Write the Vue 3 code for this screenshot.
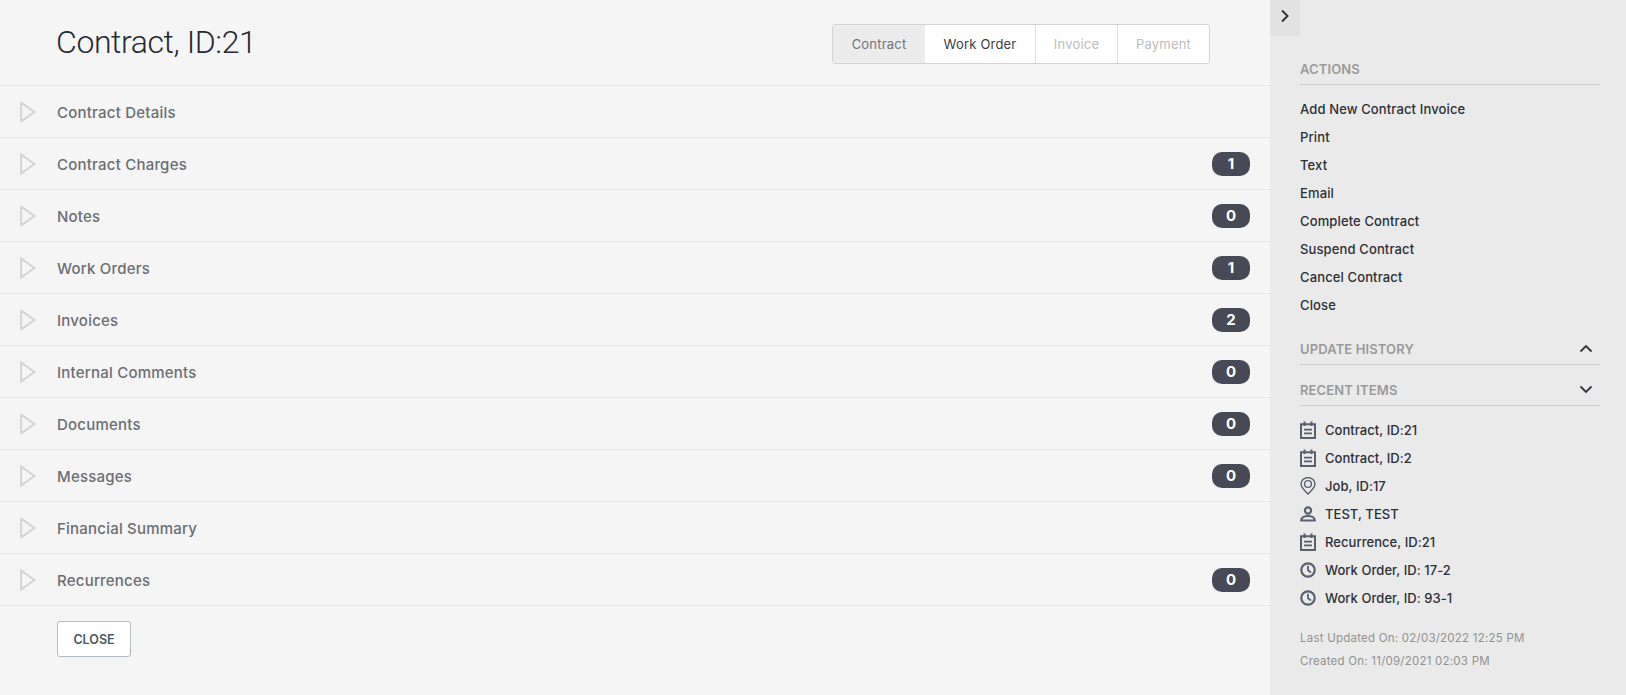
<script setup>
const rows = [
  { name: 'Contract Details' },
  { name: 'Contract Charges', count: 1 },
  { name: 'Notes', count: 0 },
  { name: 'Work Orders', count: 1 },
  { name: 'Invoices', count: 2 },
  { name: 'Internal Comments', count: 0 },
  { name: 'Documents', count: 0 },
  { name: 'Messages', count: 0 },
  { name: 'Financial Summary' },
  { name: 'Recurrences', count: 0 },
]
const tabs = [
  { label: 'Contract', cls: 'active' },
  { label: 'Work Order', cls: 'enabled' },
  { label: 'Invoice', cls: 'disabled' },
  { label: 'Payment', cls: 'disabled' },
]
const actions = ['Add New Contract Invoice', 'Print', 'Text', 'Email', 'Complete Contract', 'Suspend Contract', 'Cancel Contract', 'Close']
const recent = [
  { icon: 'cal', label: 'Contract, ID:21' },
  { icon: 'cal', label: 'Contract, ID:2' },
  { icon: 'pin', label: 'Job, ID:17' },
  { icon: 'user', label: 'TEST, TEST' },
  { icon: 'cal', label: 'Recurrence, ID:21' },
  { icon: 'clock', label: 'Work Order, ID: 17-2' },
  { icon: 'clock', label: 'Work Order, ID: 93-1' },
]
</script>

<template>
  <div class="page">
    <main class="main">
      <header class="head">
        <h1 class="title">Contract, ID:21</h1>
        <nav class="tabs">
          <span v-for="t in tabs" :key="t.label" class="tab" :class="t.cls">{{ t.label }}</span>
        </nav>
      </header>
      <section class="rows">
        <div v-for="r in rows" :key="r.name" class="row">
          <svg class="tri" width="16" height="22" viewBox="0 0 16 22">
            <path d="M1.2 1.5 L14.5 11 L1.2 20.5 Z" fill="none" stroke="#d2d2d2" stroke-width="1.8" />
          </svg>
          <span class="row-name">{{ r.name }}</span>
          <span v-if="r.count !== undefined" class="badge">{{ r.count }}</span>
        </div>
      </section>
      <button class="close">CLOSE</button>
    </main>
    <aside class="side">
      <div class="toggle">
        <svg width="10" height="14" viewBox="0 0 10 14">
          <path d="M2 1.5 L7.5 7 L2 12.5" fill="none" stroke="#33363f" stroke-width="2" />
        </svg>
      </div>
      <div class="side-body">
        <div class="sec-head first"><span>ACTIONS</span></div>
        <ul class="list actions">
          <li v-for="a in actions" :key="a">{{ a }}</li>
        </ul>
        <div class="sec-head update">
          <span>UPDATE HISTORY</span>
          <svg width="14" height="9" viewBox="0 0 14 9"><path d="M1.5 7.5 L7 2 L12.5 7.5" fill="none" stroke="#33363f" stroke-width="1.8" /></svg>
        </div>
        <div class="sec-head recent-head">
          <span>RECENT ITEMS</span>
          <svg width="14" height="9" viewBox="0 0 14 9"><path d="M1.5 1.5 L7 7 L12.5 1.5" fill="none" stroke="#33363f" stroke-width="1.8" /></svg>
        </div>
        <ul class="list recent">
          <li v-for="(i, n) in recent" :key="n">
            <svg class="ico" width="16" height="18" viewBox="0 0 16 18">
              <template v-if="i.icon === 'cal'">
                <path d="M1 3.2 H15 V17 H1 Z" fill="none" stroke="#5a6070" stroke-width="2" />
                <path d="M4.5 0.5 V5 M11.5 0.5 V5" stroke="#5a6070" stroke-width="2" />
                <path d="M4 8.6 H12 M4 12.4 H12" stroke="#5a6070" stroke-width="1.7" />
              </template>
              <template v-else-if="i.icon === 'pin'">
                <path d="M8 17 C5 13.5 1 10.8 1 7 A7 6.4 0 0 1 15 7 C15 10.8 11 13.5 8 17 Z" fill="none" stroke="#5a6070" stroke-width="1.4" />
                <circle cx="8" cy="7" r="3.4" fill="none" stroke="#5a6070" stroke-width="1.4" />
              </template>
              <template v-else-if="i.icon === 'user'">
                <circle cx="8" cy="5.5" r="3.1" fill="none" stroke="#5a6070" stroke-width="2.2" />
                <path d="M1.2 15.5 C1.2 12.2 5 11 8 11 C11 11 14.8 12.2 14.8 15.5 Z" fill="none" stroke="#5a6070" stroke-width="2.2" />
              </template>
              <template v-else>
                <circle cx="8" cy="9" r="6.7" fill="none" stroke="#5a6070" stroke-width="2.2" />
                <path d="M8 4.8 V9.2 L11 11.4" fill="none" stroke="#5a6070" stroke-width="1.8" />
              </template>
            </svg>
            <span>{{ i.label }}</span>
          </li>
        </ul>
        <div class="meta">
          <p>Last Updated On: 02/03/2022 12:25 PM</p>
          <p>Created On: 11/09/2021 02:03 PM</p>
        </div>
      </div>
    </aside>
  </div>
</template>

<style>
html, body { margin: 0; background: #f5f5f5; }
</style>

<style scoped>
.page {
  display: flex;
  width: 1626px;
  height: 695px;
  overflow: hidden;
  font-family: Inter, "Open Sans", sans-serif;
  background: #f5f5f5;
}
.main { width: 1270px; flex: none; }
.head {
  height: 85px;
  box-sizing: border-box;
  display: flex;
  justify-content: space-between;
  padding: 24px 60px 0 56px;
}
.title {
  margin: 0;
  font-family: Roboto, "Liberation Sans", sans-serif;
  font-weight: 300;
  font-size: 32px;
  line-height: 36px;
  letter-spacing: -0.4px;
  color: #262a33;
  height: 36px;
}
.tabs {
  display: flex;
  height: 40px;
  box-sizing: border-box;
  border: 1px solid #d4d4d4;
  border-radius: 3px;
  overflow: hidden;
  background: #fff;
  font-size: 13px;
  letter-spacing: 0.2px;
}
.tab {
  display: flex;
  align-items: center;
  justify-content: center;
  box-sizing: border-box;
  border-right: 1px solid #e0e0e0;
}
.tab:last-child { border-right: 0; }
.tab.active { width: 92px; background: #ececec; color: #70747c; border-right: 0; }
.tab.enabled { width: 111px; color: #3a3d45; }
.tab.disabled { color: #bdbdbd; }
.tab.disabled:nth-child(3) { width: 82px; }
.tab.disabled:nth-child(4) { width: 91px; }
.row {
  height: 52px;
  box-sizing: border-box;
  border-top: 1px solid #e6e6e6;
  display: flex;
  align-items: center;
  padding: 0 20px;
}
.row:last-child { height: 53px; border-bottom: 1px solid #e6e6e6; }
.tri { flex: none; margin-right: 21px; }
.row-name {
  flex: 1;
  font-size: 15px;
  font-weight: 500;
  letter-spacing: 0.22px;
  color: #6c6e74;
  padding-top: 1px;
}
.badge {
  width: 38px;
  height: 24px;
  border-radius: 10px;
  background: #474a56;
  color: #fff;
  font-size: 15px;
  font-weight: 700;
  display: flex;
  align-items: center;
  justify-content: center;
}
.close {
  display: block;
  margin: 15px 0 0 57px;
  width: 74px;
  height: 36px;
  box-sizing: border-box;
  border: 1px solid #b4bcc4;
  border-radius: 3px;
  background: #fff;
  color: #4a5a68;
  font-family: inherit;
  font-size: 12.5px;
  font-weight: 600;
  padding: 0;
}
.side {
  width: 356px;
  flex: none;
  background: #eaeaea;
}
.toggle {
  width: 30px;
  height: 36px;
  background: #e2e2e2;
  display: flex;
  align-items: center;
  justify-content: center;
  padding-bottom: 4px;
  box-sizing: border-box;
}
.side-body { padding: 0 26px 0 30px; }
.sec-head {
  display: flex;
  align-items: center;
  justify-content: space-between;
  height: 30px;
  box-sizing: border-box;
  border-bottom: 1px solid #cfcfcf;
  padding-right: 7px;
  font-size: 13px;
  font-weight: 600;
  letter-spacing: 0.12px;
  color: #9a9a9a;
}
.first { margin-top: 19px; padding-bottom: 2px; }
.list { list-style: none; margin: 0; padding: 0; }
.actions { padding-top: 10px; }
.actions li, .recent li {
  height: 28px;
  font-size: 13px;
  font-weight: 500;
  color: #2c2f36;
  display: flex;
  align-items: center;
}
.actions li { letter-spacing: 0.13px; padding-bottom: 1px; box-sizing: border-box; }
.recent li { letter-spacing: 0.05px; }
.update { margin-top: 15px; height: 31px; padding-bottom: 1px; }
.recent-head { margin-top: 11px; padding-bottom: 2px; }
.recent { padding-top: 10px; }
.ico { flex: none; margin-right: 9px; }
.meta { margin-top: 15px; font-size: 11.5px; letter-spacing: 0.23px; color: #929292; }
.meta p { margin: 0; height: 23px; line-height: 23px; }
</style>
